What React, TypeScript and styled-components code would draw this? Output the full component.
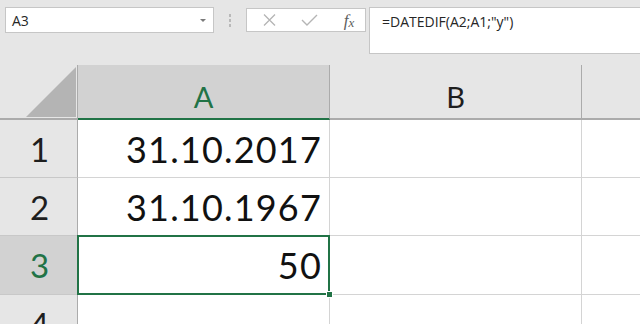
import React from "react";
import styled, { createGlobalStyle } from "styled-components";

const GlobalStyle = createGlobalStyle`
  html, body {
    margin: 0;
    padding: 0;
    background: #e6e6e6;
  }
  body {
    width: 640px;
    height: 324px;
    overflow: hidden;
  }
`;

const GREEN = "#217346";

/* WINDOW */

const Window = styled.div`
  width: 640px;
  height: 324px;
  overflow: hidden;
  background: #e6e6e6;
  display: flex;
  flex-direction: column;
`;

/* FORMULA BAR ROW */

const FormulaRow = styled.div`
  display: flex;
  align-items: flex-start;
  height: 65px;
  flex-shrink: 0;
  box-sizing: border-box;
  padding: 7px 0 0 5px;
`;

const NameBox = styled.div`
  width: 209px;
  height: 26px;
  box-sizing: border-box;
  border: 1px solid #c6c6c6;
  background: #fff;
  display: flex;
  align-items: center;
  justify-content: space-between;
  padding: 0 7px 0 6px;
  font-family: "Open Sans", sans-serif;
  font-size: 14px;
  color: #262626;
`;

const DropArrow = styled.span`
  width: 0;
  height: 0;
  border-left: 3px solid transparent;
  border-right: 3px solid transparent;
  border-top: 3px solid #7a7a7a;
`;

const Grip = styled.div`
  width: 2px;
  margin: 7px 15px 0 15px;
  display: flex;
  flex-direction: column;
  gap: 2px;

  span {
    width: 2px;
    height: 3px;
    background: #b9b9b9;
  }
`;

const ButtonBox = styled.div`
  width: 120px;
  height: 24px;
  margin-top: 1px;
  box-sizing: border-box;
  border: 1px solid #c6c6c6;
  background: #fff;
  display: flex;
  align-items: center;
  padding-left: 13px;
  gap: 22px;
`;

const IconSlot = styled.span`
  width: 18px;
  height: 14px;
  display: flex;
  align-items: center;
  justify-content: center;
`;

const Fx = styled.span`
  font-family: "Liberation Serif", serif;
  font-style: italic;
  font-size: 17px;
  color: #5e5e5e;
  line-height: 1;

  sub {
    font-size: 13px;
    vertical-align: -1px;
  }
`;

const FormulaInput = styled.div`
  flex: 1;
  height: 47px;
  margin-left: 3px;
  box-sizing: border-box;
  border: 1px solid #c6c6c6;
  border-right: none;
  background: #fff;
  padding: 4px 0 0 12px;
  font-family: "Open Sans", sans-serif;
  font-size: 14px;
  line-height: 20px;
  color: #262626;
`;

/* SHEET */

const Sheet = styled.div`
  display: grid;
  grid-template-columns: 78px 252px 252px 1fr;
  grid-template-rows: 55px 58px 58px 59px 58px;
  background: #fff;
`;

const Corner = styled.div`
  background: #e6e6e6;
  border-right: 1px solid #ababab;
  border-bottom: 2px solid #ababab;
  box-sizing: border-box;
  display: flex;
  align-items: flex-end;
  justify-content: flex-end;
  padding: 0 1px 1px 0;
`;

const ColHeader = styled.div<{ $active?: boolean; $last?: boolean }>`
  background: ${(p) => (p.$active ? "#d2d2d2" : "#e6e6e6")};
  border-right: ${(p) => (p.$last ? "none" : "1px solid #ababab")};
  border-bottom: 2px solid ${(p) => (p.$active ? GREEN : "#ababab")};
  color: ${(p) => (p.$active ? GREEN : "#1e1e1e")};
  box-sizing: border-box;
  display: flex;
  align-items: center;
  justify-content: center;
  padding-top: 9px;
  font-family: Lato, sans-serif;
  font-size: 29px;
`;

const RowHeader = styled.div<{ $active?: boolean }>`
  background: ${(p) => (p.$active ? "#d2d2d2" : "#e6e6e6")};
  border-right: 1px solid #ababab;
  border-bottom: 1px solid #c8c8c8;
  color: ${(p) => (p.$active ? GREEN : "#1e1e1e")};
  box-sizing: border-box;
  display: flex;
  align-items: center;
  justify-content: center;
  padding-left: 2px;
  font-family: Lato, sans-serif;
  font-size: 33px;
`;

const Cell = styled.div<{ $selected?: boolean; $last?: boolean }>`
  position: relative;
  background: #fff;
  border-right: ${(p) => (p.$last ? "none" : "1px solid #d4d4d4")};
  border-bottom: 1px solid #d4d4d4;
  box-sizing: border-box;
  display: flex;
  align-items: center;
  justify-content: flex-end;
  padding: 0 7px 0 0;
  font-family: Lato, sans-serif;
  font-size: 36px;
  letter-spacing: 1.2px;
  color: #111;

  ${(p) =>
    p.$selected &&
    `
    z-index: 2;
    &::after {
      content: "";
      position: absolute;
      top: -1px;
      left: -1px;
      right: -1px;
      bottom: -1px;
      border: 2px solid ${GREEN};
    }
    &::before {
      content: "";
      position: absolute;
      right: -4px;
      bottom: -4px;
      width: 5px;
      height: 5px;
      background: ${GREEN};
      border: 1px solid #fff;
      z-index: 3;
    }
  `}
`;

/* DATA */

const columns = ["A", "B", ""];
const rows: { n: number; a: string }[] = [
  { n: 1, a: "31.10.2017" },
  { n: 2, a: "31.10.1967" },
  { n: 3, a: "50" },
  { n: 4, a: "" },
];

/* COMPONENT */

const App = () => {
  return (
    <Window>
      <GlobalStyle />
      <FormulaRow>
        <NameBox>
          <span>A3</span>
          <DropArrow />
        </NameBox>

        <Grip>
          <span />
          <span />
          <span />
        </Grip>

        <ButtonBox>
          <IconSlot>
            <svg width="13" height="12" viewBox="0 0 13 12">
              <path d="M1 0.5 L12 11.5 M12 0.5 L1 11.5" stroke="#b5b5b5" strokeWidth="1.3" fill="none" />
            </svg>
          </IconSlot>
          <IconSlot>
            <svg width="17" height="12" viewBox="0 0 17 12">
              <path d="M1 6 L6 11 L16 1" stroke="#b5b5b5" strokeWidth="1.4" fill="none" />
            </svg>
          </IconSlot>
          <IconSlot>
            <Fx>
              f<sub>x</sub>
            </Fx>
          </IconSlot>
        </ButtonBox>

        <FormulaInput>=DATEDIF(A2;A1;"y")</FormulaInput>
      </FormulaRow>

      <Sheet>
        <Corner>
          <svg width="50" height="50" viewBox="0 0 50 50">
            <polygon points="0,50 50,50 50,0" fill="#b4b4b4" />
          </svg>
        </Corner>
        {columns.map((c, i) => (
          <ColHeader key={i} $active={c === "A"} $last={i === columns.length - 1}>
            {c}
          </ColHeader>
        ))}

        {rows.map((r) => (
          <React.Fragment key={r.n}>
            <RowHeader $active={r.n === 3}>{r.n}</RowHeader>
            <Cell $selected={r.n === 3}>{r.a}</Cell>
            <Cell />
            <Cell $last />
          </React.Fragment>
        ))}
      </Sheet>
    </Window>
  );
};

export default App;
